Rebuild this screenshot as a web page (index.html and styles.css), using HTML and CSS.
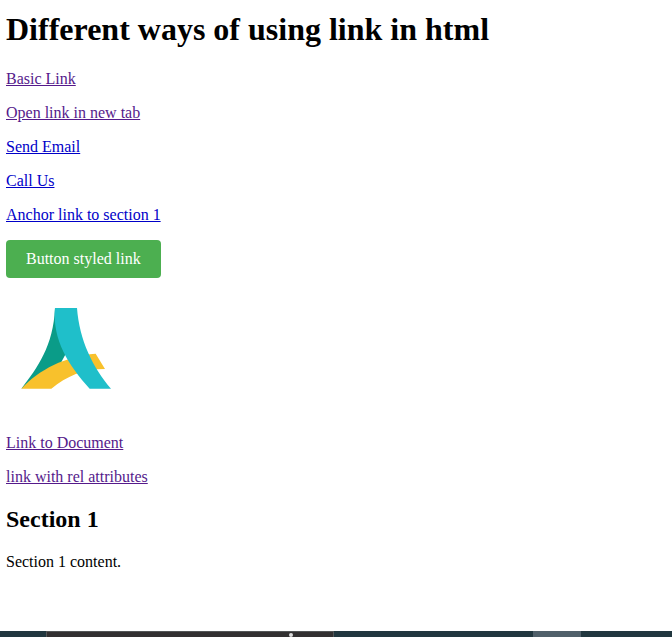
FILE: index.html
```html
<!DOCTYPE html>
<html lang="en">
<head>
<meta charset="utf-8">
<title>Links</title>
<link rel="stylesheet" href="styles.css">
</head>
<body>
<main class="content">
  <h1>Different ways of using link in html</h1>
  <p><a class="visited" href="#">Basic Link</a></p>
  <p><a class="visited" href="#">Open link in new tab</a></p>
  <p><a href="#">Send Email</a></p>
  <p><a href="#">Call Us</a></p>
  <p><a href="#section1">Anchor link to section 1</a></p>
  <p class="button-row"><a class="button" href="#">Button styled link</a></p>
  <p class="logo-row"><a href="#"><svg class="logo" viewBox="-12 -6 360 360" aria-hidden="true">
    <path fill="#0a9c88" d="M135 36 L170 168 C164 179 160 188 153 200 L120 225 L34 278 C82 216 130 150 135 36Z"/>
    <path fill="#f8c12c" d="M34 278 C88 220 165 181 257 173 L285 219 C220 219 170 240 124 278Z"/>
    <path fill="#1fbfca" d="M135 36 H201 C208 132 249 216 303 278 H239 C177 209 126 132 135 36Z"/>
  </svg></a></p>
  <p><a class="visited" href="#">Link to Document</a></p>
  <p><a class="visited" href="#">link with rel attributes</a></p>
  <h2 id="section1">Section 1</h2>
  <p>Section 1 content.</p>
</main>
<footer class="taskbar">
  <div class="search"><span class="dot"></span></div>
  <div class="active"></div>
</footer>
</body>
</html>
```
FILE: styles.css
```css
body {
  margin: 0;
  height: 637px;
  display: flex;
  flex-direction: column;
  overflow: hidden;
  background: #fff;
  color: #000;
  font: 16px/18px "Liberation Serif", "Times New Roman", serif;
}
.content {
  flex: 1;
  padding: 11px 6px 0;
}
h1 {
  margin: 0 0 22px;
  font-size: 32px;
  line-height: 37px;
}
h2 {
  margin: 20px 0;
  font-size: 24px;
  line-height: 27px;
}
p {
  margin: 0 0 16px;
}
a {
  color: #0000c8;
}
a.visited {
  color: #551a8b;
}
.button-row,
.logo-row {
  display: flex;
}
.button {
  padding: 10px 20px;
  border-radius: 4px;
  background: #4caf50;
  color: #fff;
  text-decoration: none;
}
.logo-row {
  height: 124px;
}
.logo {
  display: block;
  width: 120px;
  height: 120px;
}
.taskbar {
  display: flex;
  height: 6px;
  background: #21373f;
}
.search {
  box-sizing: border-box;
  width: 288px;
  margin-left: 46px;
  border: 1px solid #535657;
  border-bottom: 0;
  background: #323031;
}
.dot {
  display: block;
  width: 4px;
  height: 4px;
  margin: 1px 0 0 242px;
  border-radius: 2px;
  background: #ddd;
}
.active {
  width: 48px;
  margin-left: 199px;
  background: #50606a;
}
```
